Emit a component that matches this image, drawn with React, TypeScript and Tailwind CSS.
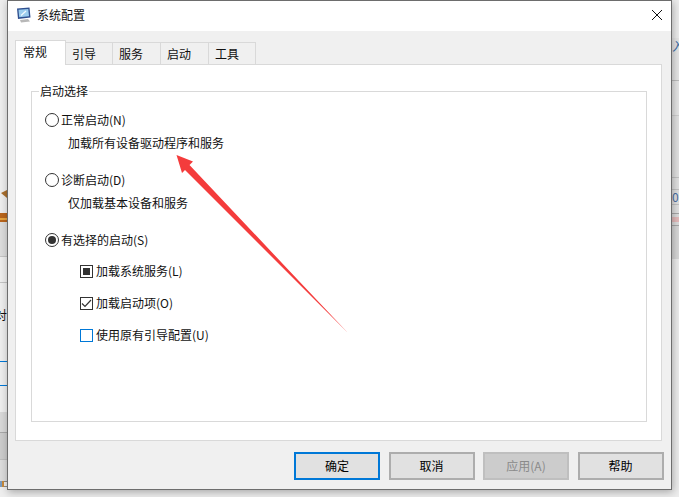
const font = "font-['Noto_Sans_CJK_SC','Liberation_Sans',sans-serif]";

const tabs = ["引导", "服务", "启动", "工具"];

function Radio({ checked, label }: { checked?: boolean; label: string }) {
  return (
    <div className="flex h-4 items-center gap-[2px]">
      <span className="flex h-[14px] w-[14px] items-center justify-center rounded-full border border-[#333333] bg-white">
        {checked && <span className="h-2 w-2 rounded-full bg-[#333333]" />}
      </span>
      <span>{label}</span>
    </div>
  );
}

function Check({ state, label }: { state: "mixed" | "checked" | "empty"; label: string }) {
  return (
    <div className="flex h-4 items-center gap-[3px]">
      <span
        className={`flex h-[13px] w-[13px] items-center justify-center border bg-white ${
          state === "empty" ? "border-[#0078d7]" : "border-[#333333]"
        }`}
      >
        {state === "mixed" && <span className="h-[7px] w-[7px] bg-[#333333]" />}
        {state === "checked" && (
          <svg viewBox="0 0 11 11" className="h-[11px] w-[11px]" fill="none" stroke="#333333" strokeWidth="1.2">
            <path d="M1 5.5 L4 8.5 L10 2" />
          </svg>
        )}
      </span>
      <span>{label}</span>
    </div>
  );
}

function Btn({ label, tone }: { label: string; tone?: "primary" | "disabled" }) {
  const look =
    tone === "primary"
      ? "border-2 border-[#0078d7] bg-[#e1e1e1] text-black"
      : tone === "disabled"
        ? "border-2 border-[#bfbfbf] bg-[#cccccc] text-[#8a8a8a]"
        : "border-2 border-[#adadad] bg-[#e1e1e1] text-black";
  return (
    <button type="button" className={`flex h-[28px] w-[86px] items-center justify-center text-xs ${look}`}>
      {label}
    </button>
  );
}

export default function App() {
  return (
    <div className={`relative flex h-[497px] w-[679px] overflow-hidden bg-[#ededed] text-xs text-[#111111] ${font}`}>
      {/* bits of the page behind the dialog */}
      <div className="flex h-full w-[7px] shrink-0 flex-col overflow-hidden bg-[#eeeeee]">
        <div className="h-[190px] shrink-0" />
        <svg viewBox="0 0 7 8" className="h-[8px] w-[7px] shrink-0">
          <polygon points="1,3 7,0 7,8" fill="#a9702f" />
        </svg>
        <div className="h-[15px] shrink-0" />
        <div className="flex h-[9px] shrink-0 flex-col bg-[#b9651c]">
          <div className="mt-[5px] h-[2px] bg-[#e7a43f]" />
        </div>
        <div className="h-[35px] shrink-0 border-b border-[#c4c4c4] bg-[#dcdcdc]" />
        <div className="h-[26px] shrink-0 border-b border-[#c4c4c4]" />
        <div className="flex h-[79px] shrink-0 flex-col border-b border-[#0078d7]">
          <div className="mt-[24px] flex h-4 justify-end overflow-hidden leading-4">
            <span className="shrink-0">对</span>
          </div>
        </div>
        <div className="h-[24px] shrink-0 border-b border-[#0078d7]" />
        <div className="h-[26px] shrink-0" />
        <div className="h-[21px] shrink-0 border-b border-[#a8a8a8] bg-[#d8d8d8]" />
        <div className="h-[27px] shrink-0 border-b border-[#bdbdbd] bg-[#cccccc]" />
        <div className="h-[21px] shrink-0 bg-[#dcdcdc]" />
        <div className="flex h-[6px] shrink-0">
          <div className="w-[2px] bg-[#7a9cc0]" />
          <div className="w-[2px] bg-[#c98a3a]" />
          <div className="w-[3px] border-y border-[#8a8a8a]" />
        </div>
      </div>

      <div className="z-10 flex h-[490px] w-[665px] shrink-0 flex-col border border-[#6d6d6d] bg-[#f0f0f0] shadow-[1px_2px_8px_rgba(0,0,0,0.3)]">
        {/* title bar */}
        <div className="flex h-[30px] shrink-0 items-center bg-white pb-[3px] pl-[8px] pr-[9px]">
          <svg viewBox="0 0 16 16" className="h-[16px] w-[16px] shrink-0">
            <path d="M1 1.5 L13.5 0.5 L14.5 10.5 L2 12 Z" fill="#2f4f8f" />
            <path d="M2.5 2.8 L12.3 2 L13 9.2 L3.2 10.2 Z" fill="#9ccdee" />
            <path d="M5 8.5 L10 4" stroke="#f2fafe" strokeWidth="1.3" />
            <path d="M4 13 L12 12 L14 14.5 L5 15.5 Z" fill="#b8b8b8" />
          </svg>
          <span className="ml-[5px] text-xs">系统配置</span>
          <svg viewBox="0 0 10 10" className="ml-auto h-[10px] w-[10px]" fill="none" stroke="#111111" strokeWidth="1">
            <path d="M0 0 L10 10 M10 0 L0 10" />
          </svg>
        </div>

        <div className="flex flex-1 flex-col px-[7px] pt-[9px]">
          {/* tabs */}
          <div className="relative z-10 flex h-[24px] items-end">
            <div className="flex h-[25px] w-[51px] translate-y-px items-center border border-b-0 border-[#d9d9d9] bg-white pb-[2px] pl-[7px]">
              常规
            </div>
            {tabs.map((t) => (
              <div
                key={t}
                className="-ml-px flex h-[22px] w-[49px] items-center border border-b-0 border-[#d9d9d9] bg-[#f0f0f0] pl-[6px] last:w-[48px] [&:nth-child(2)]:w-[48px]"
              >
                {t}
              </div>
            ))}
          </div>

          {/* tab panel */}
          <div className="flex h-[377px] w-[647px] flex-col border border-[#d9d9d9] bg-white px-[15px] pt-[26px]">
            <div className="relative h-[331px] w-[616px] border border-[#d9d9d9] pl-[13px] pt-[20px]">
              <span className="absolute -top-[9px] left-[7px] bg-white px-px leading-4">启动选择</span>
              <Radio label="正常启动(N)" />
              <div className="ml-[23px] mt-[7px] leading-4">加载所有设备驱动程序和服务</div>
              <div className="mt-[21px]">
                <Radio label="诊断启动(D)" />
              </div>
              <div className="ml-[23px] mt-[7px] leading-4">仅加载基本设备和服务</div>
              <div className="mt-[21px]">
                <Radio checked label="有选择的启动(S)" />
              </div>
              <div className="ml-[35px] mt-[15px] flex flex-col gap-[16px]">
                <Check state="mixed" label="加载系统服务(L)" />
                <Check state="checked" label="加载启动项(O)" />
                <Check state="empty" label="使用原有引导配置(U)" />
              </div>
            </div>
          </div>

          {/* footer buttons */}
          <div className="ml-[279px] mt-[11px] flex gap-[8.5px]">
            <Btn label="确定" tone="primary" />
            <Btn label="取消" />
            <Btn label="应用(A)" tone="disabled" />
            <Btn label="帮助" />
          </div>
        </div>
      </div>

      <div className="flex h-full w-[7px] shrink-0 flex-col overflow-hidden bg-[#ededed]">
        <div className="h-[38px] shrink-0 bg-[#ededed]" />
        <div className="flex h-4 shrink-0 overflow-hidden bg-[#e6e6e6] leading-4 text-[#3a6ea5]">
          <span className="shrink-0">入</span>
        </div>
        <div className="h-[27px] shrink-0 border-b border-[#bdbdbd] bg-[#e6e6e6]" />
        <div className="h-[35px] shrink-0 border-b border-[#cfcfcf] bg-[#e6e6e6]" />
        <div className="h-[62px] shrink-0 border-b border-[#c4c4c4] bg-[#e2e2e2]" />
        <div className="h-[12px] shrink-0 border-b border-[#c4c4c4] bg-[#e2e2e2]" />
        <div className="flex h-[14px] shrink-0 overflow-hidden bg-[#e2e2e2] leading-[14px] text-[#4a6fa5]">
          <span className="shrink-0">0x</span>
        </div>
        <div className="h-[9px] shrink-0 border-t border-[#c4c4c4] bg-[#e2e2e2]" />
        <div className="flex h-[13px] shrink-0 flex-col border-y border-l-0 border-[#a8a8a8] bg-[#dedede]">
          <div className="mt-[3px] h-[5px] bg-[#e5bcbc]" />
        </div>
        <div className="h-[33px] shrink-0 bg-[#d8d8d8]" />
      </div>

      {/* annotation arrow */}
      <svg viewBox="0 0 679 497" className="pointer-events-none absolute inset-0 z-20 h-[497px] w-[679px]">
        <polygon points="176.5,155 193,161.5 189.5,165 348,333 185,170 182,173" fill="#f43c3c" />
      </svg>
    </div>
  );
}
